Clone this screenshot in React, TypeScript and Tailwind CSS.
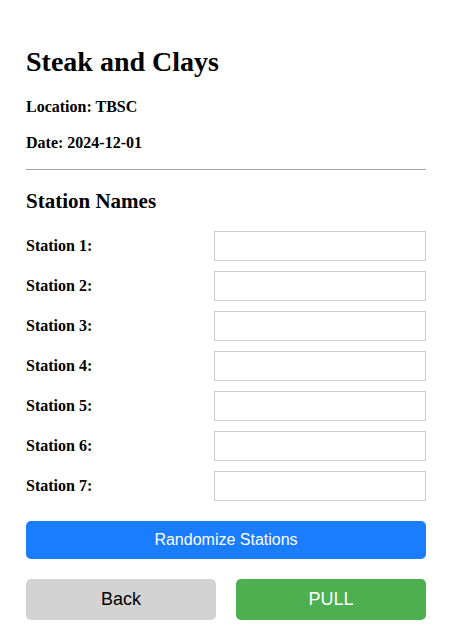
const stations = [1, 2, 3, 4, 5, 6, 7];

export default function App() {
  return (
    <div className="min-h-screen bg-white pl-[26px] pt-[46px] font-['Liberation_Serif',serif] text-black">
      <div className="w-[400px]">
        <h1 className="text-[28px] font-bold leading-[32px]">Steak and Clays</h1>
        <p className="mt-[19px] text-[16px] font-bold leading-[20px]">Location: TBSC</p>
        <p className="mt-[16px] text-[16px] font-bold leading-[20px]">Date: 2024-12-01</p>
        <hr className="mt-[16px] border-t border-[#a0a0a0]" />
        <h2 className="mt-[18px] text-[21px] font-bold leading-[26px]">Station Names</h2>
        <div className="mt-[17px] flex flex-col gap-[10px]">
          {stations.map((n) => (
            <div key={n} className="flex h-[30px] items-center justify-between">
              <label className="text-[16px] font-bold">Station {n}:</label>
              <input
                type="text"
                className="h-[30px] w-[212px] border border-[#cccccc] bg-white px-2 text-[14px] outline-none"
              />
            </div>
          ))}
        </div>
        <button className="mt-[20px] flex h-[38px] w-full items-center justify-center rounded-[5px] bg-[#1a7cff] font-['Liberation_Sans',sans-serif] text-[16px] text-white">
          Randomize Stations
        </button>
        <div className="mt-[20px] flex gap-[20px]">
          <button className="flex h-[41px] flex-1 items-center justify-center rounded-[5px] bg-[#d3d3d3] font-['Liberation_Sans',sans-serif] text-[18px] text-black">
            Back
          </button>
          <button className="flex h-[41px] flex-1 items-center justify-center rounded-[5px] bg-[#4caf50] font-['Liberation_Sans',sans-serif] text-[18px] text-white">
            PULL
          </button>
        </div>
      </div>
    </div>
  );
}
